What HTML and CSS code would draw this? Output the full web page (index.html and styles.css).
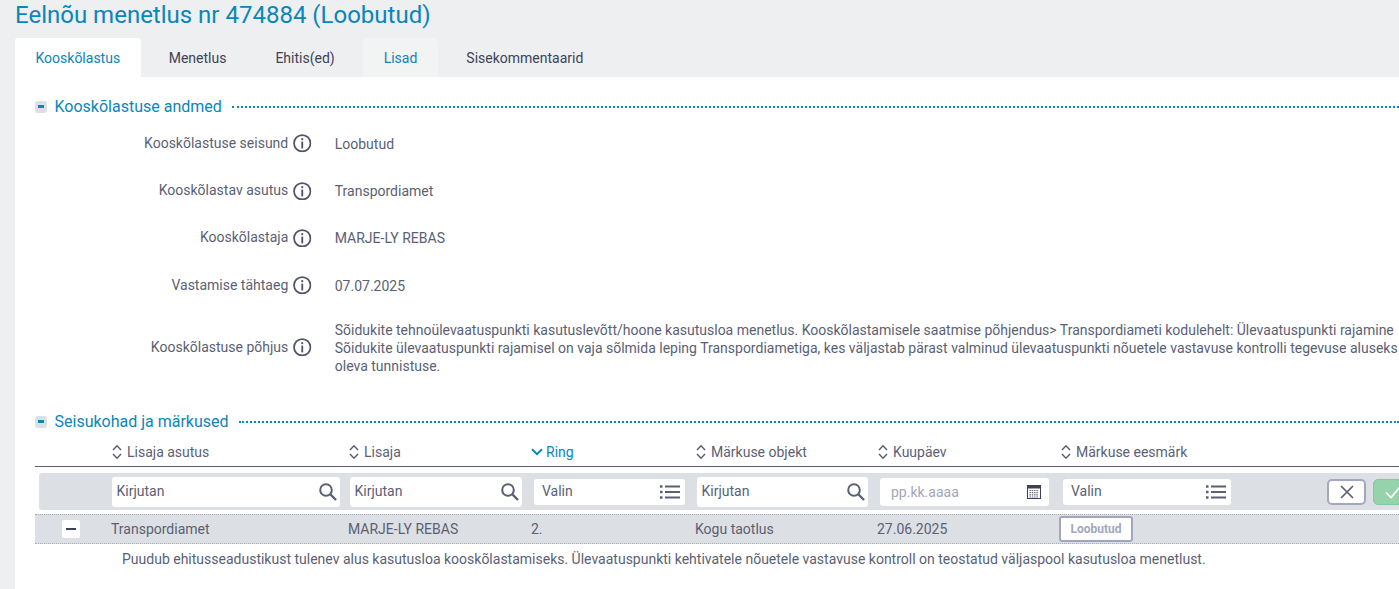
FILE: index.html
```html
<!DOCTYPE html>
<html lang="et">
<head>
<meta charset="utf-8">
<title>Eelnõu menetlus</title>
<link rel="stylesheet" href="styles.css">
</head>
<body>
<svg class="defs" width="0" height="0" aria-hidden="true">
  <symbol id="info" viewBox="0 0 18 18"><circle cx="9" cy="9" r="8" fill="none" stroke="#50546a" stroke-width="1.7"/><rect x="8.1" y="7.4" width="1.8" height="6.6" fill="#50546a"/><rect x="8.1" y="4" width="1.8" height="2" fill="#50546a"/></symbol>
  <symbol id="sort" viewBox="0 0 10 16"><path d="M1 6 5 1.8 9 6M1 10 5 14.2 9 10" fill="none" stroke="#5b5f73" stroke-width="1.5"/></symbol>
  <symbol id="search" viewBox="0 0 18 18"><circle cx="7" cy="7" r="5.8" fill="none" stroke="#5b5f73" stroke-width="2"/><path d="M11 11 17 17" stroke="#5b5f73" stroke-width="2.4"/></symbol>
  <symbol id="list" viewBox="0 0 20 16"><path d="M5 2.5H20M5 8H20M5 13.5H20" stroke="#5b5f73" stroke-width="2"/><path d="M0 2.5H2.5M0 8H2.5M0 13.5H2.5" stroke="#5b5f73" stroke-width="2.4"/></symbol>
</svg>
<h1 class="title">Eelnõu menetlus nr 474884 (Loobutud)</h1>
<nav class="tabs">
  <a class="tab tab-active">Kooskõlastus</a>
  <a class="tab">Menetlus</a>
  <a class="tab">Ehitis(ed)</a>
  <a class="tab tab-hover">Lisad</a>
  <a class="tab">Sisekommentaarid</a>
</nav>
<main class="panel">
  <header class="section-head">
    <span class="collapse"></span><h2>Kooskõlastuse andmed</h2><span class="dots"></span>
  </header>
  <dl class="fields">
    <div class="field"><dt>Kooskõlastuse seisund<svg class="info"><use href="#info"/></svg></dt><dd>Loobutud</dd></div>
    <div class="field"><dt>Kooskõlastav asutus<svg class="info"><use href="#info"/></svg></dt><dd>Transpordiamet</dd></div>
    <div class="field"><dt>Kooskõlastaja<svg class="info"><use href="#info"/></svg></dt><dd>MARJE-LY REBAS</dd></div>
    <div class="field"><dt>Vastamise tähtaeg<svg class="info"><use href="#info"/></svg></dt><dd>07.07.2025</dd></div>
    <div class="field field-long"><dt>Kooskõlastuse põhjus<svg class="info"><use href="#info"/></svg></dt><dd>Sõidukite tehnoülevaatuspunkti kasutuslevõtt/hoone kasutusloa menetlus. Kooskõlastamisele saatmise põhjendus&gt; Transpordiameti kodulehelt: Ülevaatuspunkti rajamine<br>Sõidukite ülevaatuspunkti rajamisel on vaja sõlmida leping Transpordiametiga, kes väljastab pärast valminud ülevaatuspunkti nõuetele vastavuse kontrolli tegevuse aluseks<br>oleva tunnistuse.</dd></div>
  </dl>
  <header class="section-head section-second">
    <span class="collapse"></span><h2>Seisukohad ja märkused</h2><span class="dots"></span>
  </header>
  <div class="table">
    <div class="thead grid">
      <span></span>
      <span class="th"><svg class="sort"><use href="#sort"/></svg>Lisaja asutus</span>
      <span class="th"><svg class="sort"><use href="#sort"/></svg>Lisaja</span>
      <span class="th th-active"><svg class="chev" viewBox="0 0 12 8"><path d="M1 1.2 6 6.2 11 1.2" fill="none" stroke="#0a86b8" stroke-width="2"/></svg>Ring</span>
      <span class="th"><svg class="sort"><use href="#sort"/></svg>Märkuse objekt</span>
      <span class="th"><svg class="sort"><use href="#sort"/></svg>Kuupäev</span>
      <span class="th"><svg class="sort"><use href="#sort"/></svg>Märkuse eesmärk</span>
    </div>
    <div class="filters">
      <div class="input tall w228"><span>Kirjutan</span><svg class="ic-search"><use href="#search"/></svg></div>
      <div class="input tall w172"><span>Kirjutan</span><svg class="ic-search"><use href="#search"/></svg></div>
      <div class="input select w151"><span>Valin</span><svg class="ic-list"><use href="#list"/></svg></div>
      <div class="input tall w171"><span>Kirjutan</span><svg class="ic-search"><use href="#search"/></svg></div>
      <div class="input date w169"><span class="ph">pp.kk.aaaa</span>
        <svg class="ic-cal" viewBox="0 0 14 14"><rect x=".5" y=".5" width="13" height="13" fill="#fff" stroke="#3d4256"/><rect x="1" y="1" width="12" height="2.5" fill="#3d4256"/><path d="M2.5 5.5h9M2.5 7.7h9M2.5 9.9h9M2.5 12h9" stroke="#5b5f73" stroke-width="1.2" stroke-dasharray="1.4 .9"/></svg></div>
      <div class="input select w168"><span>Valin</span><svg class="ic-list"><use href="#list"/></svg></div>
      <div class="actions">
        <button class="btn btn-x"><svg viewBox="0 0 14 14"><path d="M1 1 13 13M13 1 1 13" stroke="#5b5f73" stroke-width="1.7"/></svg></button>
        <button class="btn btn-ok"><svg viewBox="0 0 16 14"><path d="M1 7.5 6 12.5 15 2" fill="none" stroke="#fff" stroke-width="1.7"/></svg></button>
      </div>
    </div>
    <div class="row grid">
      <span class="toggle-cell"><span class="toggle"></span></span>
      <span class="cell">Transpordiamet</span>
      <span class="cell">MARJE-LY REBAS</span>
      <span class="cell">2.</span>
      <span class="cell">Kogu taotlus</span>
      <span class="cell">27.06.2025</span>
      <span><span class="badge">Loobutud</span></span>
    </div>
    <p class="note">Puudub ehitusseadustikust tulenev alus kasutusloa kooskõlastamiseks. Ülevaatuspunkti kehtivatele nõuetele vastavuse kontroll on teostatud väljaspool kasutusloa menetlust.</p>
  </div>
</main>
</body>
</html>
```

FILE: styles.css
```css
* { box-sizing: border-box; }
html, body { margin: 0; height: 100%; overflow: hidden; }
body { width: 1399px; height: 589px; background: #eeeff1; padding-left: 15px; font: 14px/18px Roboto, "Liberation Sans", sans-serif; color: #5b5f73; }
.defs { position: absolute; }
.title { margin: 0; height: 38px; font-size: 24px; line-height: 31px; font-weight: 400; color: #0a86b8; white-space: nowrap; }
.tabs { display: flex; gap: 7px; height: 39px; }
.tab { display: flex; align-items: center; height: 39px; padding: 0 21px; color: #3d4256; border-radius: 3px 3px 0 0; white-space: nowrap; }
.tab-active { background: #fff; color: #0a86b8; padding: 0 20.5px; }
.tab-hover { background: #f2f3f3; color: #0a86b8; }
.panel { background: #fff; width: 1384px; height: 512px; padding: 19px 0 0 20px; overflow: hidden; }
.section-head { display: flex; align-items: center; height: 21px; width: 1364px; }
.section-second { margin-top: 25px; }
.collapse { width: 12px; height: 12px; background: #dcdfe3; border-radius: 3px; margin: 1px 7.5px 0 0; position: relative; flex: none; }
.collapse::after { content: ""; position: absolute; left: 3px; top: 4px; width: 6px; height: 3px; background: #0a86b8; }
.section-head h2 { margin: 0; font-size: 16px; line-height: 21px; font-weight: 400; color: #0a86b8; white-space: nowrap; }
.dots { flex: 1; margin-left: 10px; margin-top: 1px; border-top: 2px dotted #0a86b8; }
.fields { margin: 3px 0 0; }
.field { display: flex; align-items: center; height: 47.3px; padding-left: 19px; }
.field-long { height: 77px; }
.field dt { width: 257.75px; flex: none; display: flex; justify-content: flex-end; align-items: center; gap: 5px; white-space: nowrap; position: relative; top: -1px; }
.field dd { margin: 0 0 0 23px; white-space: nowrap; }
.info { width: 18.5px; height: 18.5px; flex: none; position: relative; top: 1px; }
.grid { display: grid; grid-template-columns: 76px 237px 183px 164px 182px 183px 1fr; }
.table { width: 1364px; }
.thead { height: 35px; padding-top: 5px; align-items: center; border-bottom: 1px solid #5b5f73; }
.th { display: flex; align-items: center; gap: 5px; white-space: nowrap; }
.th-active { color: #0a86b8; gap: 3px; }
.sort { width: 10px; height: 16px; flex: none; margin-left: 1px; }
.chev { width: 12px; height: 8px; flex: none; }
.filters { display: grid; grid-template-columns: 238px 184px 163px 183px 183px 264px 1fr; margin: 6px 0 0 4px; padding-left: 73px; height: 37px; width: 1360px; background: #dcdfe3; border-radius: 3px 0 0 3px; align-items: center; }
.input { height: 26px; background: #fff; border-radius: 3px; display: flex; align-items: center; justify-content: space-between; padding: 0 3px 0 4.5px; }
.input > span { padding-bottom: 1px; }
.tall { height: 30px; }
.select { padding: 0 5px 0 8px; }
.date { height: 28px; margin-top: 1px; padding: 0 8px 0 11px; }
.w228 { width: 228px; }
.w172 { width: 172px; }
.w151 { width: 151px; }
.w171 { width: 171px; }
.w169 { width: 169px; }
.w168 { width: 168px; }
.ph { color: #a3a6b4; }
.ic-search { width: 18px; height: 18px; }
.ic-list { width: 20px; height: 16px; }
.ic-cal { width: 14px; height: 14px; }
.actions { display: flex; gap: 7px; align-items: center; }
.btn { flex: none; width: 39px; height: 26px; border-radius: 5px; padding: 0; display: flex; align-items: center; justify-content: center; }
.btn-x { background: #fff; border: 2px solid #a3a6bf; }
.btn-x svg { width: 14px; height: 14px; }
.btn-ok { background: #96d3ac; border: 1px solid #7fcb9b; }
.btn-ok svg { width: 16px; height: 14px; }
.row { height: 30px; margin-top: 4px; background: #dcdfe3; border-top: 1px dotted #a9acb0; border-bottom: 1px dotted #a9acb0; align-items: center; white-space: nowrap; }
.cell { padding-bottom: 1px; }
.toggle-cell { display: flex; padding-left: 27px; }
.toggle { width: 18px; height: 18px; background: #fff; border-radius: 2px; position: relative; }
.toggle::after { content: ""; position: absolute; left: 4px; top: 8px; width: 10px; height: 2px; background: #3d4256; }
.badge { display: block; height: 26px; width: 74px; margin-left: -1px; border: 2px solid #a3a6bf; border-radius: 3px; background: #fff; color: #a3a6bf; font-size: 12px; font-weight: 700; line-height: 22px; text-align: center; }
.note { margin: 6px 0 0 87px; white-space: nowrap; }
```
